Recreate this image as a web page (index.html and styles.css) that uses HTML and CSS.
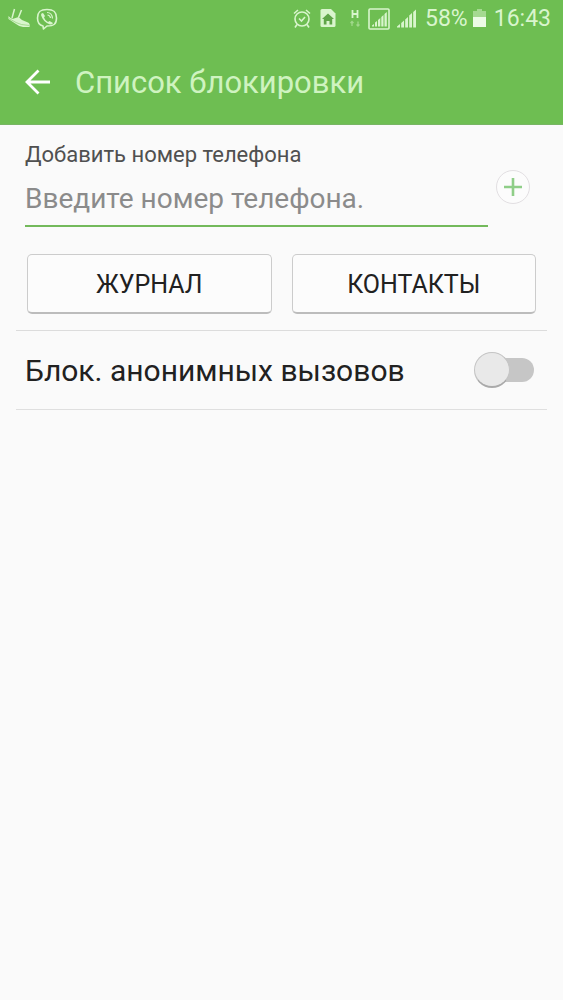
FILE: index.html
```html
<!DOCTYPE html>
<html lang="ru">
<head>
<meta charset="utf-8">
<meta name="viewport" content="width=device-width, initial-scale=1">
<title>Список блокировки</title>
<link rel="stylesheet" href="styles.css">
</head>
<body>
<header class="top">
  <div class="status">
    <svg class="status-shoe" width="24" height="22" viewBox="0 0 24 22" aria-hidden="true">
      <path d="M.5 8Q3 11.500 6 10.500L10.500 9L14 12L20 14.500Q22.500 16 21.500 19H15Q11 18.500 8 16L.5 11z" fill="#d9f5cd"/>
      <path d="M4 10L6.500 1M10.500 9.500L13.500 2" fill="none" stroke="#d9f5cd" stroke-width="1.500"/>
      <path d="M1 10.500L8 14.500Q12 17 21.500 17.500" fill="none" stroke="#8fcf78" stroke-width=".7"/>
    </svg>
    <svg width="22" height="22" viewBox="0 0 22 22" aria-hidden="true">
      <path d="M7 18C3 17 1.500 15 1.500 10C1.500 4 4 1.500 11 1.500S20.500 4 20.500 10S18 18 11 18L7.500 21z" fill="none" stroke="#d9f5cd" stroke-width="1.600" stroke-linejoin="round"/>
      <path d="M7 5l2 3-1 1.500q1 3 4 4.500l1.500-1L17 15q-1 2-3 1.500Q7 14 5 7q0-2 2-2z" fill="#d9f5cd"/>
      <path d="M11 4.500q5 0 5.500 6M11.500 7q2.500 0 3 3" fill="none" stroke="#d9f5cd" stroke-width="1.200"/>
    </svg>
    <span class="spacer"></span>
    <svg width="18" height="20" viewBox="0 0 18 20" aria-hidden="true">
      <g fill="none" stroke="#d9f5cd" stroke-width="1.600">
        <circle cx="9" cy="10" r="7"/>
        <path d="M1 4.500L5 1M17 4.500L13 1M4 15.500l-2 3M14 15.500l2 3M6 9.500l2.500 2.500L12 8"/>
      </g>
    </svg>
    <svg class="status-home" width="16" height="20" viewBox="0 0 16 20" aria-hidden="true">
      <path d="M2 0h9l4.500 4.500v12q0 1.500-1.500 1.500H2Q.5 18 .5 16.500V1.500Q.5 0 2 0z" fill="#d9f5cd"/>
      <path d="M8 4.500l6 5.500h-1.800v5.500H9.500V12h-3v3.500H3.800V10H2z" fill="#5fa548"/>
    </svg>
    <svg class="status-data" width="10" height="20" viewBox="0 0 10 20" aria-hidden="true">
      <path d="M2.500 1v8M7.500 1v8M2.500 5h5" fill="none" stroke="#d9f5cd" stroke-width="1.800"/>
      <path d="M2 12.500v4.500M.5 14L2 12.500L3.500 14M8 12.500v4.500M6.500 15.500L8 17l1.500-1.500" fill="none" stroke="#a0d88b" stroke-width="1.300"/>
    </svg>
    <svg class="status-sim" width="22" height="22" viewBox="0 0 22 22" aria-hidden="true">
      <rect x="1" y="1" width="20" height="20" rx="1" fill="none" stroke="#d9f5cd" stroke-width="1.600"/>
      <path d="M4 18.500v-1l2-1.500v2.500zM7 18.500v-4l2-1.500v5.500zM10 18.500V12l2.300-2v8.500zM13.300 18.500V9l2.200-2v11.500zM16.500 18.500V6l2.300-2v14.500z" fill="#d9f5cd"/>
    </svg>
    <svg class="status-signal" width="20" height="20" viewBox="0 0 20 20" aria-hidden="true">
      <path d="M0 18.500v-1L3 15v3.500zM4.200 18.500v-4.500L7 11.500v7zM8.200 18.500v-8L11 8v10.500zM12.200 18.500V6.500L15 4v14.500zM16.200 18.500V3L19 .5v18z" fill="#d9f5cd"/>
    </svg>
    <span>58%</span>
    <svg class="status-battery" width="13" height="20" viewBox="0 0 13 20" aria-hidden="true">
      <path d="M4 0h5v2h4v6H0V2h4z" fill="#a5d991"/>
      <path d="M0 8h13v10H0z" fill="#ecfbe6"/>
    </svg>
    <time>16:43</time>
  </div>
  <div class="appbar">
    <button class="back" type="button" aria-label="Назад">
      <svg width="26" height="26" viewBox="0 0 26 26" aria-hidden="true">
        <path d="M25 13H2M13.500 1.500L2 13l11.500 11.500" fill="none" stroke="#fff" stroke-width="2.800"/>
      </svg>
    </button>
    <h1 class="title">Список блокировки</h1>
  </div>
</header>
<main class="content">
  <section class="add">
    <div class="entry">
      <div class="field">
        <label class="label" for="phone">Добавить номер телефона</label>
        <input class="phone" id="phone" type="tel" placeholder="Введите номер телефона.">
      </div>
      <button class="plus" type="button" aria-label="Добавить">
        <svg width="18" height="18" viewBox="0 0 18 18" aria-hidden="true">
          <path d="M9 0v18M0 9h18" fill="none" stroke="#8fce88" stroke-width="2.600"/>
        </svg>
      </button>
    </div>
    <div class="sources">
      <button class="source" type="button">ЖУРНАЛ</button>
      <button class="source" type="button">КОНТАКТЫ</button>
    </div>
  </section>
  <section class="option">
    <label class="option-label" for="anonymous">Блок. анонимных вызовов</label>
    <input class="switch" id="anonymous" type="checkbox" role="switch">
  </section>
</main>
</body>
</html>
```
FILE: styles.css
```css
*,
*::before,
*::after {
  box-sizing: border-box;
}

body {
  margin: 0;
  min-height: 100vh;
  background: #fafafa;
  color: #212121;
  font-family: Roboto, "Noto Sans", sans-serif;
}

button,
input {
  font: inherit;
  color: inherit;
}

.top {
  background: #6ebe52;
  border-bottom: 1px solid #78b564;
}

.status {
  display: flex;
  align-items: center;
  height: 38px;
  padding: 0 12px 0 8px;
  color: #d9f5cd;
  font-size: 23px;
  line-height: 38px;
}

.status svg {
  flex: none;
}

.status-shoe {
  margin-right: 4px;
}

.spacer {
  flex: 1;
}

.status-home {
  margin-left: 9px;
}

.status-data {
  margin: 0 8px 0 14px;
}

.status-signal {
  margin: 0 8px 0 7px;
}

.status-battery {
  margin: 0 8px 0 5px;
}

.appbar {
  display: flex;
  align-items: center;
  gap: 24px;
  height: 86px;
  padding: 2px 25px 0;
}

.back {
  display: flex;
  padding: 0;
  border: 0;
  background: none;
}

.title {
  margin: 0;
  padding-top: 2px;
  color: #cff3c0;
  font-size: 31px;
  font-weight: 400;
  line-height: 40px;
}

.content {
  padding: 0 16px;
}

.add {
  padding: 16px 11px 16px 9px;
  border-bottom: 1px solid #dcdcdc;
}

.entry {
  display: flex;
  align-items: center;
  gap: 8px;
  padding-right: 6px;
}

.field {
  flex: 1;
  min-width: 0;
}

.label {
  display: block;
  color: #505050;
  font-size: 22px;
  line-height: 28px;
}

.phone {
  display: block;
  width: 100%;
  height: 58px;
  padding: 6px 0 4px;
  border: 0;
  border-bottom: 2px solid #73b95b;
  border-radius: 0;
  outline: 0;
  background: none;
  font-size: 28px;
}

.phone::placeholder {
  color: #8b8b8b;
  opacity: 1;
}

.plus {
  display: flex;
  flex: none;
  align-items: center;
  justify-content: center;
  width: 34px;
  height: 34px;
  margin-top: 6px;
  padding: 0;
  border: 1px solid #e2dfe2;
  border-radius: 50%;
  background: #fcfcfc;
}

.sources {
  display: grid;
  grid-template-columns: 1fr 1fr;
  gap: 20px;
  margin-top: 27px;
  padding-left: 2px;
}

.source {
  height: 60px;
  padding: 2px 0 0;
  border: 1px solid #cccccc;
  border-bottom: 2px solid #bcbcbc;
  border-radius: 5px;
  background: #fcfcfc;
  font-size: 25px;
}

.option {
  display: flex;
  align-items: center;
  justify-content: space-between;
  height: 79px;
  padding: 0 13px 0 9px;
  border-bottom: 1px solid #dfdfdf;
}

.option-label {
  padding-top: 2px;
  font-size: 30px;
  line-height: 40px;
}

.switch {
  position: relative;
  width: 60px;
  height: 36px;
  margin: 0;
  appearance: none;
}

.switch::before {
  content: "";
  position: absolute;
  inset: 6px 0 6px 12px;
  border-radius: 12px;
  background: #c6c6c6;
}

.switch::after {
  content: "";
  position: absolute;
  top: 0;
  left: 0;
  width: 36px;
  height: 36px;
  border: 1px solid #c4c4c4;
  border-bottom: 2px solid #aaaaaa;
  border-radius: 50%;
  background: #e9e9e9;
}

.switch:checked::before {
  background: #a8d89a;
}

.switch:checked::after {
  left: 24px;
  background: #6ebe52;
}
```
